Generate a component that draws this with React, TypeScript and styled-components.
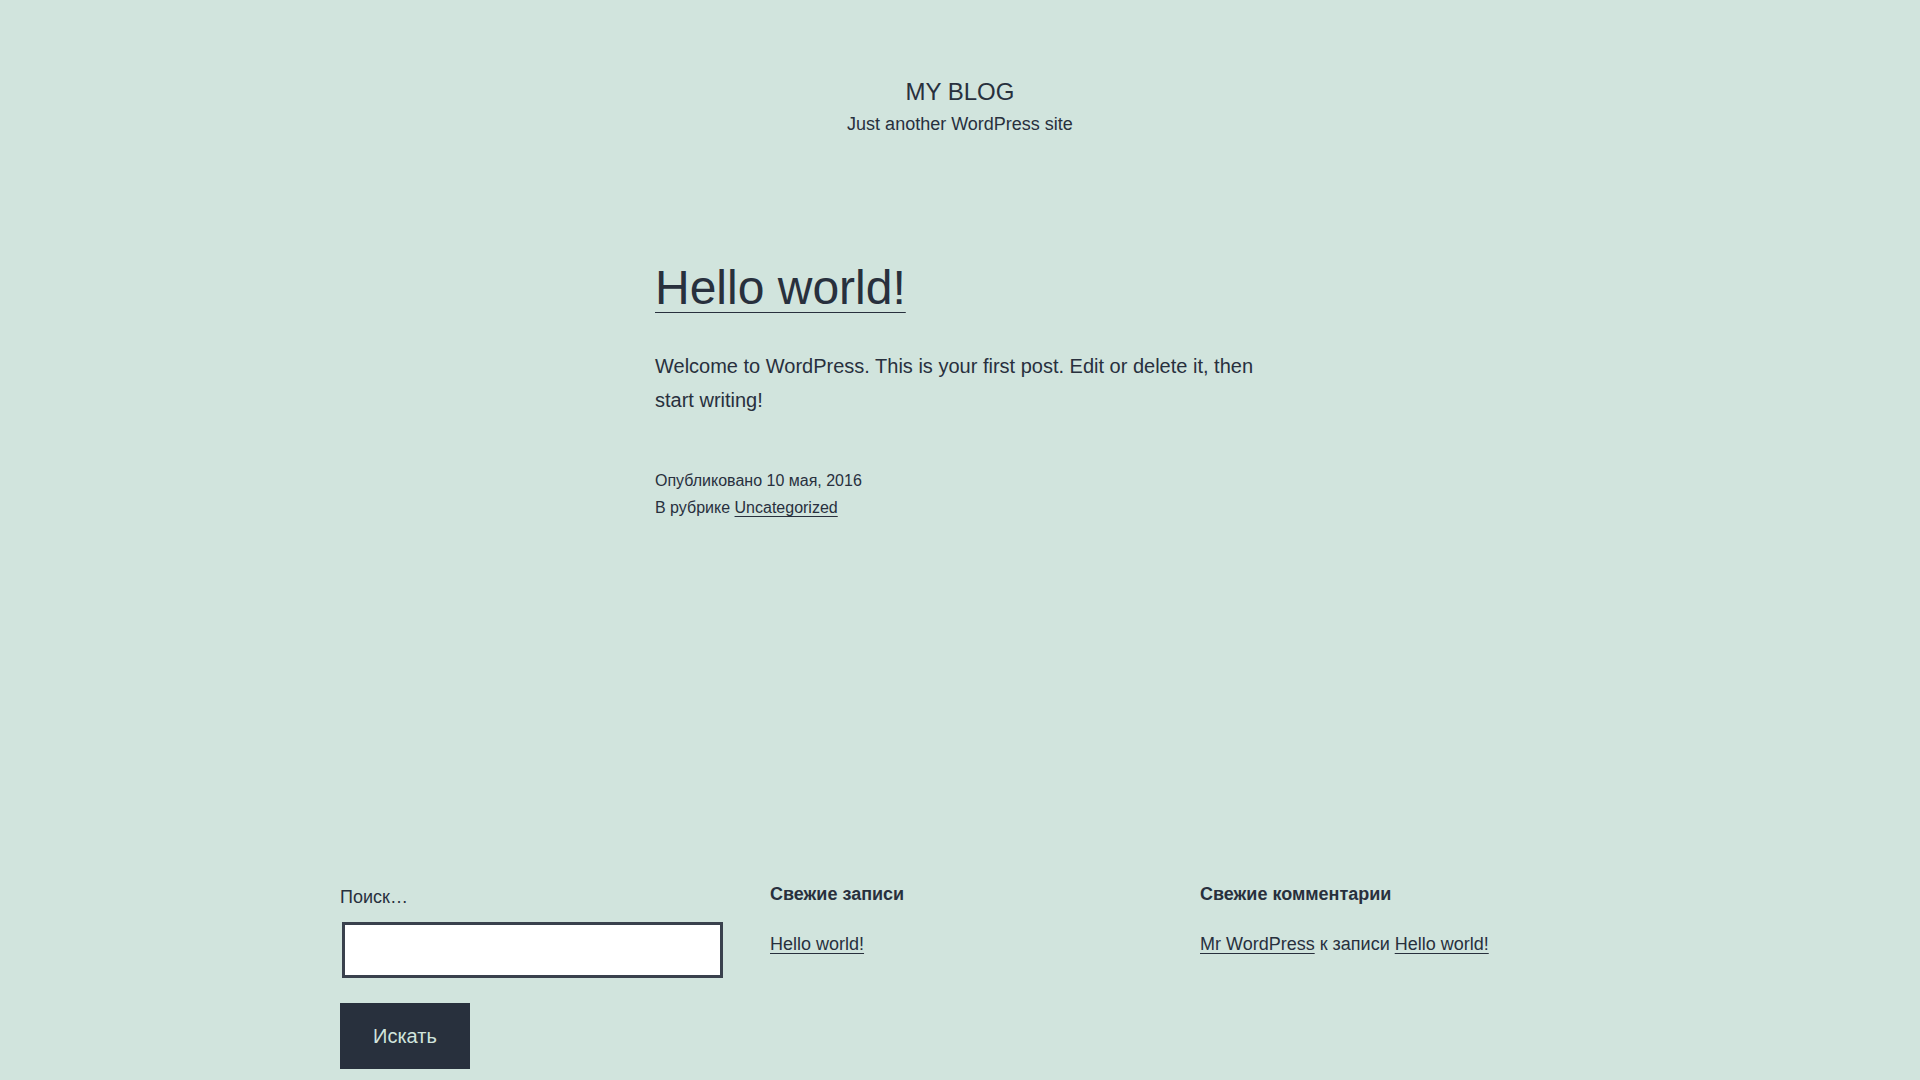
import styled, { createGlobalStyle } from "styled-components";

const GlobalStyle = createGlobalStyle`
  html, body {
    margin: 0;
    padding: 0;
    background: #d1e4dd;
  }
  body {
    color: #28303d;
    font-family: "Liberation Sans", Arial, sans-serif;
    -webkit-font-smoothing: antialiased;
  }
  * {
    box-sizing: border-box;
  }
`;

const Page = styled.div`
  min-height: 1080px;
  display: flex;
  flex-direction: column;
  align-items: center;
  overflow: hidden;
`;

const Header = styled.header`
  padding-top: 77px;
  text-align: center;
`;

const SiteTitle = styled.h1`
  margin: 0 0 5px;
  font-size: 24px;
  line-height: 30px;
  font-weight: 400;
  text-transform: uppercase;
`;

const SiteDescription = styled.p`
  margin: 0;
  font-size: 18px;
  line-height: 25px;
`;

const Main = styled.main`
  width: 610px;
  margin-top: 120px;
`;

const Link = styled.a<{ $offset?: number }>`
  color: inherit;
  text-decoration: underline;
  text-decoration-thickness: 1px;
  text-underline-offset: ${(p) => p.$offset ?? 3}px;
`;

const EntryTitle = styled.h2`
  margin: 0;
  font-size: 48px;
  line-height: 1.3;
  font-weight: 400;
`;

const EntryContent = styled.p`
  margin: 30px 0 0;
  font-size: 20px;
  line-height: 1.7;
`;

const EntryFooter = styled.footer`
  margin-top: 51px;
  font-size: 16px;
  line-height: 26.5px;
`;

const MetaLine = styled.div``;

const Widgets = styled.aside`
  width: 1240px;
  margin-top: 361.5px;
  display: grid;
  grid-template-columns: repeat(3, minmax(0, 1fr));
  column-gap: 50px;
  align-items: start;
`;

const Widget = styled.section`
  display: flex;
  flex-direction: column;
  align-items: flex-start;
  min-width: 0;
`;

const SearchForm = styled.form`
  display: flex;
  flex-direction: column;
  align-items: flex-start;
  width: 100%;
`;

const Label = styled.label`
  font-size: 18px;
  line-height: 1.7;
  margin-top: -1px;
`;

const SearchInput = styled.input`
  margin: 10px 0 0 2px;
  width: 381px;
  height: 56px;
  flex-shrink: 0;
  border: 3px solid #39414d;
  background: #fff;
  font-size: 18px;
  padding: 10px;
  outline: none;
  font-family: inherit;
`;

const SearchButton = styled.button`
  margin-top: 25px;
  border: 0;
  background: #28303d;
  color: #d1e4dd;
  font-family: inherit;
  font-size: 20px;
  line-height: 34px;
  padding: 16px 33px;
  cursor: pointer;
`;

const WidgetTitle = styled.h2`
  margin: 0;
  font-size: 18px;
  line-height: 23px;
  font-weight: 700;
`;

const WidgetList = styled.ul`
  list-style: none;
  margin: 23px 0 0;
  padding: 0;
  font-size: 18px;
  line-height: 1.7;
`;

export default function App() {
  return (
    <>
      <GlobalStyle />
      <Page>
        <Header>
          <SiteTitle>My Blog</SiteTitle>
          <SiteDescription>Just another WordPress site</SiteDescription>
        </Header>

        <Main>
          <article>
            <EntryTitle>
              <Link href="#" $offset={8}>
                Hello world!
              </Link>
            </EntryTitle>
            <EntryContent>
              Welcome to WordPress. This is your first post. Edit or delete it,
              then start writing!
            </EntryContent>
            <EntryFooter>
              <MetaLine>Опубликовано 10 мая, 2016</MetaLine>
              <MetaLine>
                В рубрике <Link href="#">Uncategorized</Link>
              </MetaLine>
            </EntryFooter>
          </article>
        </Main>

        <Widgets>
          <Widget>
            <SearchForm onSubmit={(e) => e.preventDefault()}>
              <Label htmlFor="s">Поиск…</Label>
              <SearchInput id="s" type="search" />
              <SearchButton type="submit">Искать</SearchButton>
            </SearchForm>
          </Widget>
          <Widget>
            <WidgetTitle>Свежие записи</WidgetTitle>
            <WidgetList>
              <li>
                <Link href="#">Hello world!</Link>
              </li>
            </WidgetList>
          </Widget>
          <Widget>
            <WidgetTitle>Свежие комментарии</WidgetTitle>
            <WidgetList>
              <li>
                <Link href="#">Mr WordPress</Link> к записи{" "}
                <Link href="#">Hello world!</Link>
              </li>
            </WidgetList>
          </Widget>
        </Widgets>
      </Page>
    </>
  );
}
